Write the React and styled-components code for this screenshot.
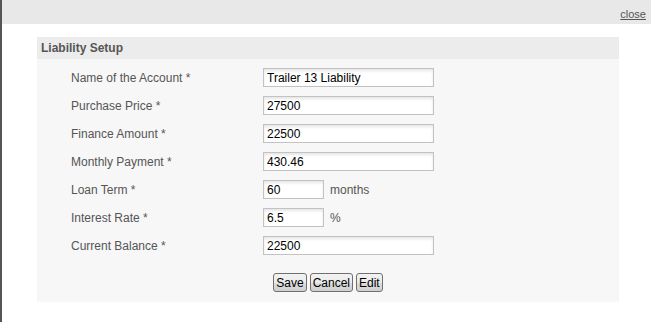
import React from "react"
import styled, { createGlobalStyle } from "styled-components"

const Global = createGlobalStyle`
body {
    margin: 0;
    background: #fff;
    font-family: "Liberation Sans", Arial, sans-serif;
}
`

const fields = [
    { label: "Name of the Account *", value: "Trailer 13 Liability" },
    { label: "Purchase Price *", value: "27500" },
    { label: "Finance Amount *", value: "22500" },
    { label: "Monthly Payment *", value: "430.46" },
    { label: "Loan Term *", value: "60", short: true, unit: "months" },
    { label: "Interest Rate *", value: "6.5", short: true, unit: "%" },
    { label: "Current Balance *", value: "22500" },
]

const App = () => {
    return (
        <>
            <Global />
            <Page>
                <TopBar>
                    <CloseLink href="#">close</CloseLink>
                </TopBar>
                <Content>
                    <Panel>
                        <PanelTitle>Liability Setup</PanelTitle>
                        <Form>
                            {fields.map((f) => (
                                <Row key={f.label}>
                                    <Label>{f.label}</Label>
                                    <Input type="text" defaultValue={f.value} short={f.short ? 1 : 0} />
                                    {f.unit && <Unit>{f.unit}</Unit>}
                                </Row>
                            ))}
                            <Buttons>
                                <Button>Save</Button>
                                <Button>Cancel</Button>
                                <Button>Edit</Button>
                            </Buttons>
                        </Form>
                    </Panel>
                </Content>
            </Page>
        </>
    )
}

const Page = styled.div`
height: 322px;
border-left: 2px solid #555;
box-sizing: border-box;
`;

const TopBar = styled.div`
height: 24px;
background-color: #e8e8e8;
display: flex;
justify-content: flex-end;
align-items: center;
padding-right: 5px;
`;

const CloseLink = styled.a`
font-size: 11px;
color: #555;
text-decoration: underline;
margin-top: 3px;
`;

const Content = styled.div`
padding: 13px 0 0 35px;
`;

const Panel = styled.div`
width: 582px;
background-color: #f7f7f7;
`;

const PanelTitle = styled.div`
height: 22px;
line-height: 22px;
background-color: #ececec;
padding-left: 4px;
font-size: 12px;
font-weight: bold;
color: #555;
`;

const Form = styled.div`
padding: 9px 0 10px 34px;
display: flex;
flex-direction: column;
gap: 9px;
`;

const Row = styled.div`
display: flex;
align-items: center;
height: 19px;
`;

const Label = styled.div`
width: 192px;
font-size: 12px;
color: #555;
`;

const Input = styled.input`
box-sizing: border-box;
width: ${(p) => (p.short ? "61px" : "171px")};
height: 19px;
border: 1px solid #c2c2c2;
background: #fff;
box-shadow: inset 0 2px 3px rgba(0, 0, 0, 0.1);
padding: 0 3px;
font-family: "Liberation Sans", Arial, sans-serif;
font-size: 12px;
color: #000;
outline: none;
`;

const Unit = styled.span`
margin-left: 6px;
font-size: 12px;
color: #555;
`;

const Buttons = styled.div`
display: flex;
justify-content: center;
gap: 3px;
margin: 9px 0 0 -34px;
`;

const Button = styled.button`
height: 19px;
padding: 0 2px;
border: 1px solid #707070;
border-radius: 3px;
background: linear-gradient(#f2f2f2, #ebebeb 50%, #dddddd 51%, #cfcfcf);
font-family: "Liberation Sans", Arial, sans-serif;
font-size: 12px;
color: #000;
`;

export default App
